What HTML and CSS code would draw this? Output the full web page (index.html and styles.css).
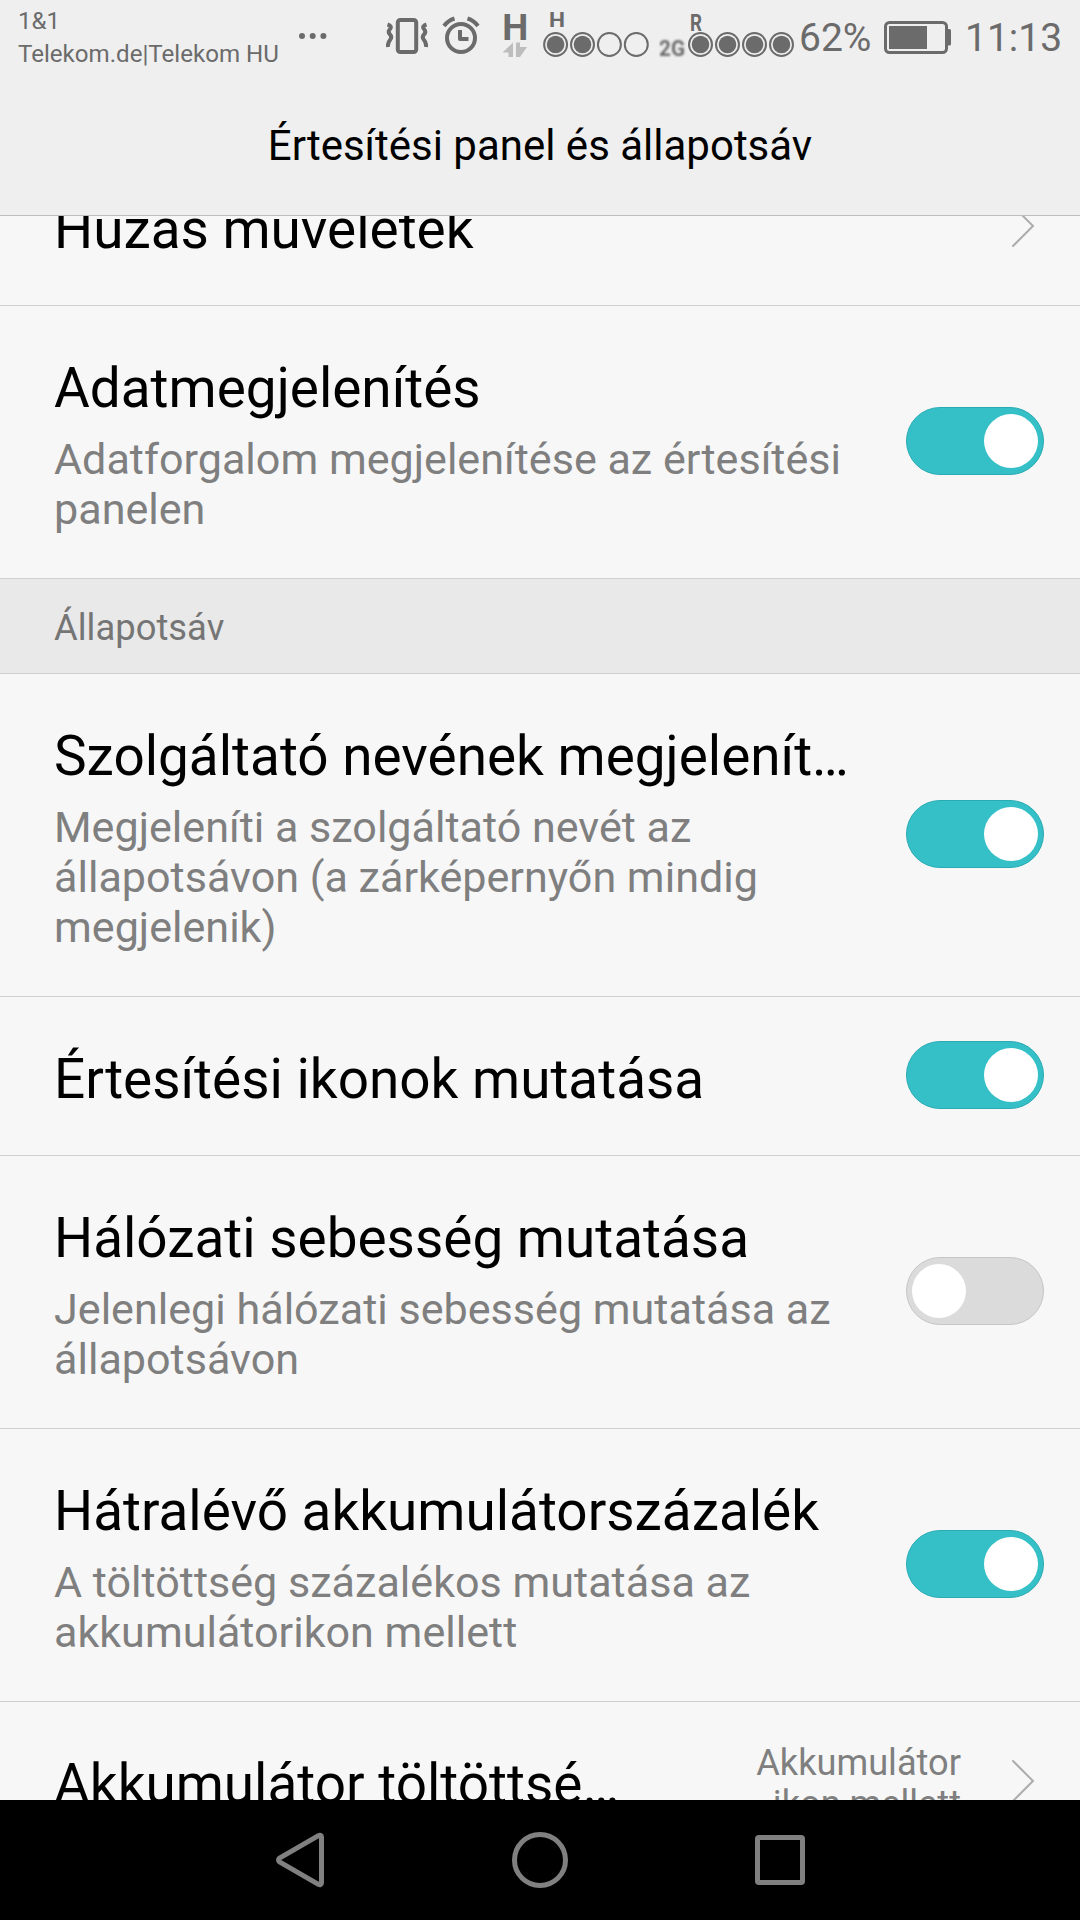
FILE: index.html
```html
<!DOCTYPE html>
<html lang="hu">
<head>
<meta charset="utf-8">
<title>Értesítési panel és állapotsáv</title>
<link rel="stylesheet" href="styles.css">
</head>
<body>
<div class="screen">
  <header class="top">
    <div class="status">
      <div class="carriers"><span>1&amp;1</span><span class="carrier-long">Telekom.de|Telekom HU</span></div>
      <svg class="more" width="28" height="8" viewBox="0 0 28 8"><circle cx="3" cy="4" r="3"/><circle cx="13.7" cy="4" r="3"/><circle cx="24.4" cy="4" r="3"/></svg>
      <svg class="icon vibrate" width="42" height="72" viewBox="386 0 42 72"><rect class="line4" x="397.8" y="20" width="18.4" height="32" rx="2.5"/><path class="line4" d="M387.500 24.500Q392.500 26 390 29T390 34.500T390 40T388 47M426.500 24.500Q421.500 26 424 29T424 34.500T424 40T426 47"/></svg>
      <svg class="icon alarm" width="38" height="72" viewBox="442 0 38 72"><circle class="line4" cx="461" cy="38" r="14"/><path class="line4" d="M460 30v9h8.500M444 26q4-5.500 10.500-7.500M478 26q-4-5.500-10.500-7.500"/></svg>
      <svg class="icon data" width="28" height="72" viewBox="501 0 28 72"><text class="bold" x="502.300" y="40" font-size="37" textLength="26" lengthAdjust="spacingAndGlyphs">H</text><path class="faint" d="M513 42.500v14.500h-4.500v-4.500h-6zM516 42.500h4v4.500h7l-7 10h-4z"/></svg>
      <svg class="icon sim1" width="108" height="72" viewBox="542 0 108 72"><text class="bold" x="549" y="27" font-size="20.500" textLength="16" lengthAdjust="spacingAndGlyphs">H</text>
        <g class="line2"><circle cx="555.600" cy="44.500" r="11.500"/><circle cx="582.500" cy="44.500" r="11.500"/><circle cx="609.400" cy="44.500" r="11.500"/><circle cx="636.300" cy="44.500" r="11.500"/></g>
        <circle cx="555.600" cy="44.500" r="8.800"/><circle cx="582.500" cy="44.500" r="8.800"/></svg>
      <svg class="icon sim2" width="136" height="72" viewBox="659 0 136 72"><text class="bold soft" x="659" y="55.500" font-size="22" textLength="26" lengthAdjust="spacingAndGlyphs">2G</text><text class="bold" x="690" y="31" font-size="23" textLength="12" lengthAdjust="spacingAndGlyphs">R</text>
        <g class="line2"><circle cx="700.500" cy="44.500" r="11.500"/><circle cx="727.500" cy="44.500" r="11.500"/><circle cx="754.500" cy="44.500" r="11.500"/><circle cx="781.500" cy="44.500" r="11.500"/></g>
        <circle cx="700.500" cy="44.500" r="8.800"/><circle cx="727.500" cy="44.500" r="8.800"/><circle cx="754.500" cy="44.500" r="8.800"/><circle cx="781.500" cy="44.500" r="8.800"/></svg>
      <span class="percent">62%</span>
      <svg class="icon battery" width="68" height="72" viewBox="884 0 68 72"><rect class="line3" x="885.500" y="22.500" width="61" height="30" rx="4"/><path d="M889 26h38v23h-38zM947 29h2.500q1.500 0 1.500 1.500v13.500q0 1.500-1.500 1.500H947z"/></svg>
      <span class="clock">11:13</span>
    </div>
    <h1 class="heading">Értesítési panel és állapotsáv</h1>
  </header>
  <main class="list">
    <div class="row row-first"><div class="text"><div class="title">Húzás műveletek</div></div>
      <svg class="chevron" width="24" height="44" viewBox="0 0 24 44"><path d="M2 2l20 20L2 42"/></svg></div>
    <div class="row"><div class="text"><div class="title">Adatmegjelenítés</div><div class="sub">Adatforgalom megjelenítése az értesítési<br>panelen</div></div><div class="toggle on"></div></div>
    <div class="section">Állapotsáv</div>
    <div class="row"><div class="text"><div class="title">Szolgáltató nevének megjelenít…</div><div class="sub">Megjeleníti a szolgáltató nevét az<br>állapotsávon (a zárképernyőn mindig<br>megjelenik)</div></div><div class="toggle on"></div></div>
    <div class="row"><div class="text"><div class="title">Értesítési ikonok mutatása</div></div><div class="toggle on"></div></div>
    <div class="row"><div class="text"><div class="title">Hálózati sebesség mutatása</div><div class="sub">Jelenlegi hálózati sebesség mutatása az<br>állapotsávon</div></div><div class="toggle"></div></div>
    <div class="row"><div class="text"><div class="title">Hátralévő akkumulátorszázalék</div><div class="sub">A töltöttség százalékos mutatása az<br>akkumulátorikon mellett</div></div><div class="toggle on"></div></div>
    <div class="row"><div class="text"><div class="title">Akkumulátor töltöttsé…</div></div><div class="value">Akkumulátor<br>ikon mellett</div>
      <svg class="chevron" width="24" height="44" viewBox="0 0 24 44"><path d="M2 2l20 20L2 42"/></svg></div>
  </main>
  <nav class="nav">
    <svg width="60" height="60" viewBox="0 0 60 60"><path d="M9.500 28.200L48 5.800Q51.500 4.500 51.500 7V53Q51.500 55.500 48 54.200L9.500 31.800Q7.500 30 9.500 28.200z"/></svg>
    <svg width="60" height="60" viewBox="0 0 60 60"><circle cx="30" cy="30" r="25.500"/></svg>
    <svg width="60" height="60" viewBox="0 0 60 60"><rect x="7.500" y="7.500" width="45" height="45" rx="1.500"/></svg>
  </nav>
</div>
</body>
</html>
```
FILE: styles.css
```css
* { box-sizing: border-box; }
body { margin: 0; font-family: Roboto, "Liberation Sans", sans-serif; background: #f7f7f7; }
.screen { width: 1080px; height: 1920px; display: flex; flex-direction: column; overflow: hidden; }
svg { display: block; flex: none; }

.top { height: 216px; flex: none; background: #efefef; border-bottom: 1px solid #bdbdbd; }
.status { height: 72px; display: flex; color: #6b6b6b; fill: #6b6b6b; white-space: nowrap; }
.carriers { width: 281px; margin-left: 18px; padding-top: 5px; display: flex; flex-direction: column; font-size: 24.1px; line-height: 33px; }
.more { margin-top: 32px; }
.line4, .line3, .line2 { fill: none; stroke: #6b6b6b; stroke-linejoin: round; }
.line4 { stroke-width: 4px; }
.line3 { stroke-width: 3px; }
.line2 { stroke-width: 2px; }
.bold { font-weight: 700; }
.soft { filter: blur(0.8px); }
.faint { fill: #bdbdbd; filter: blur(0.6px); }
.vibrate { margin-left: 59px; }
.alarm { margin-left: 14px; }
.data { margin-left: 21px; }
.sim1 { margin-left: 13px; }
.sim2 { margin-left: 9px; }
.percent, .clock { font-size: 39px; line-height: 77px; }
.percent { width: 84px; margin-left: 4px; }
.battery { margin-left: 1px; }
.clock { margin-left: 13px; }
.heading { margin: 49px 0 0; text-align: center; font-size: 42px; font-weight: 400; line-height: 50px; color: #000; }

.list { flex: none; height: 1584px; overflow: hidden; background: #f7f7f7; }
.row { display: flex; align-items: center; padding: 0 36px 0 54px; border-bottom: 1px solid #d0d0d0; }
.row-first { margin-top: -69px; }
.text { flex: 1; padding: 51px 0 43px; white-space: nowrap; }
.title { padding-bottom: 2px; font-size: 54.9px; line-height: 62px; color: #000; }
.sub { margin-top: 14px; font-size: 43.1px; line-height: 50px; color: #7f7f7f; }
.section { height: 95px; padding-left: 54px; border-bottom: 1px solid #d0d0d0; background: #e9e9e9; color: #757575; font-size: 36.4px; line-height: 98px; }
.value { margin: 3px 50px 0 0; text-align: right; font-size: 36.2px; line-height: 41px; color: #7f7f7f; }
.chevron { margin-right: 9px; fill: none; stroke: #adadad; stroke-width: 2px; stroke-linecap: round; }
.toggle { width: 138px; height: 68px; margin-bottom: 2px; padding: 6px 5px; border: 1px solid #c6c6c6; border-radius: 34px; background: #dbdbdb; display: flex; }
.toggle::before { content: ""; width: 54px; height: 54px; border-radius: 50%; background: #fff; }
.toggle.on { justify-content: flex-end; background: #35c0c7; border-color: #2aabb3; }

.nav { flex: 1; background: #000; display: flex; align-items: center; justify-content: center; gap: 180px; fill: none; stroke: #808080; stroke-width: 5px; stroke-linejoin: round; }
```
